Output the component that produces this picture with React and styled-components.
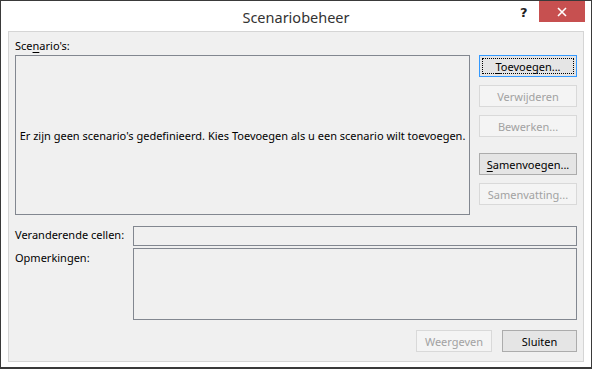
import React from "react";
import styled, { createGlobalStyle } from "styled-components";

const Global = createGlobalStyle`
  html, body { margin: 0; padding: 0; background: #ffffff; }
  * { box-sizing: border-box; }
`;

const Window = styled.div`
  width: 592px;
  height: 369px;
  background: #ffffff;
  border: 1px solid #3a3a3a;
  border-bottom-width: 2px;
  display: flex;
  flex-direction: column;
  font-family: "Noto Sans", "Open Sans", sans-serif;
  font-size: 11px;
  color: #000;
  white-space: nowrap;
  overflow: hidden;
`;

const TitleBar = styled.div`
  height: 30px;
  flex-shrink: 0;
  position: relative;
  display: flex;
  align-items: center;
  justify-content: center;
`;

const Title = styled.div`
  font-family: "Noto Sans", sans-serif;
  font-size: 14.5px;
  color: #333;
  margin-top: 1px;
`;

const Help = styled.div`
  position: absolute;
  left: 519px;
  top: 4px;
  font-family: "DejaVu Sans", sans-serif;
  font-weight: bold;
  font-size: 13px;
  color: #222;
`;

const Close = styled.div`
  position: absolute;
  left: 538px;
  top: 0;
  width: 46px;
  height: 21px;
  background: #c75050;
  display: flex;
  align-items: center;
  justify-content: center;
`;

const Panel = styled.div`
  flex: 1;
  margin: 0 7px 5px 7px;
  background: #f0f0f0;
  border: 1px solid #d5d5d5;
  padding: 6px 6px 8px 6px;
  display: flex;
  flex-direction: column;
`;

const TopRow = styled.div`
  display: flex;
  gap: 9px;
`;

const LeftCol = styled.div`
  display: flex;
  flex-direction: column;
  width: 455px;
`;

const Label = styled.div`
  height: 17px;
  line-height: 16px;
  color: #000;
`;

const U = styled.span`
  text-decoration: underline;
  text-underline-offset: 2px;
`;

const ListBox = styled.div`
  height: 160px;
  border: 1px solid #828790;
  background: #f0f0f0;
  display: flex;
  align-items: center;
  justify-content: center;
  color: #000;
`;

const ButtonCol = styled.div`
  display: flex;
  flex-direction: column;
  padding-top: 17px;
  width: 98px;
`;

const Button = styled.div`
  height: 22px;
  width: ${(p) => p.$w || "98px"};
  margin-top: ${(p) => p.$mt || "0px"};
  border: 1px solid ${(p) => (p.$disabled ? "#d9d9d9" : p.$default ? "#3399ff" : "#acacac")};
  background: ${(p) => (p.$disabled ? "#f4f4f4" : "#e5e5e5")};
  color: ${(p) => (p.$disabled ? "#a2a2a2" : "#000")};
  display: flex;
  align-items: center;
  justify-content: center;
  position: relative;
`;

const Focus = styled.div`
  position: absolute;
  inset: 2px;
  border: 1px dotted #000;
`;

const FieldRow = styled.div`
  display: flex;
  margin-top: ${(p) => p.$mt};
`;

const FieldLabel = styled.div`
  width: 118px;
  line-height: 18px;
  padding-top: ${(p) => p.$pt || "0px"};
`;

const Field = styled.div`
  width: 444px;
  height: ${(p) => p.$h};
  border: 1px solid #828790;
  background: #f0f0f0;
`;

const BottomRow = styled.div`
  display: flex;
  justify-content: flex-end;
  gap: 10px;
  margin-top: 10px;
`;

export default function App() {
  return (
    <>
      <Global />
      <Window>
        <TitleBar>
          <Title>Scenariobeheer</Title>
          <Help>?</Help>
          <Close>
            <svg width="10" height="10" viewBox="0 0 10 10">
              <path d="M1 1 L9 9 M9 1 L1 9" stroke="#fff" strokeWidth="1.6" />
            </svg>
          </Close>
        </TitleBar>
        <Panel>
          <TopRow>
            <LeftCol>
              <Label>
                Sce<U>n</U>ario's:
              </Label>
              <ListBox>
                Er zijn geen scenario's gedefinieerd. Kies Toevoegen als u een scenario wilt toevoegen.
              </ListBox>
            </LeftCol>
            <ButtonCol>
              <Button $default>
                <Focus />
                <span>
                  <U>T</U>oevoegen...
                </span>
              </Button>
              <Button $disabled $mt="8px">Verwijderen</Button>
              <Button $disabled $mt="8px">Bewerken...</Button>
              <Button $mt="16px">
                <span>
                  <U>S</U>amenvoegen...
                </span>
              </Button>
              <Button $disabled $mt="8px">Samenvatting...</Button>
            </ButtonCol>
          </TopRow>
          <FieldRow $mt="11px">
            <FieldLabel>Veranderende cellen:</FieldLabel>
            <Field $h="20px" />
          </FieldRow>
          <FieldRow $mt="2px">
            <FieldLabel $pt="1px">Opmerkingen:</FieldLabel>
            <Field $h="72px" />
          </FieldRow>
          <BottomRow>
            <Button $disabled $w="76px">Weergeven</Button>
            <Button $w="75px">Sluiten</Button>
          </BottomRow>
        </Panel>
      </Window>
    </>
  );
}
